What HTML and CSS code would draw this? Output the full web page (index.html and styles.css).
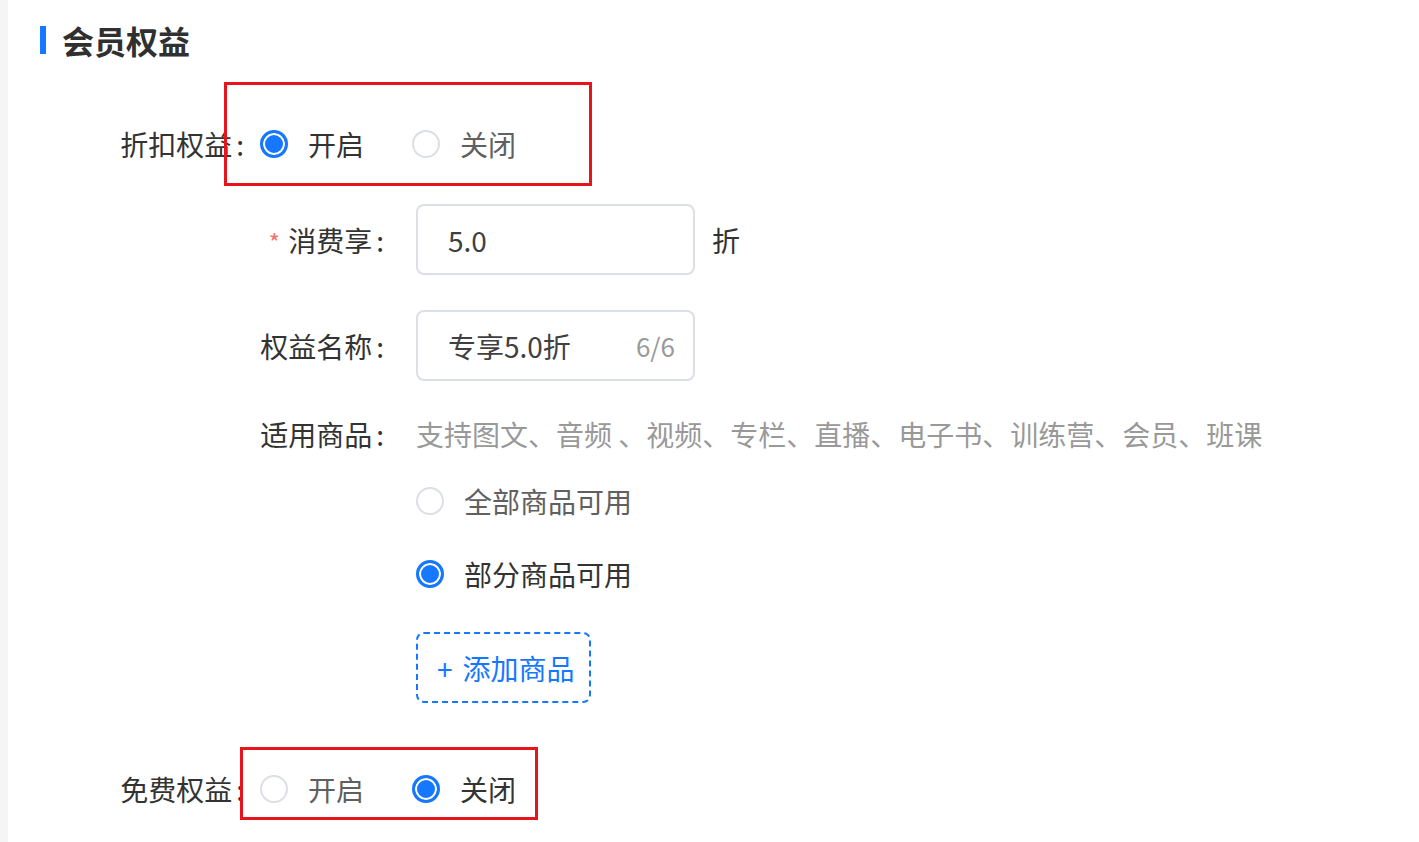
FILE: index.html
```html
<!DOCTYPE html>
<html>
  <head>
    <title>会员权益</title>
    <link rel="stylesheet" href="styles.css">
  </head>
  <body>
    <div class="page">
      <div class="side"></div>
      <div class="main">
        <h2 class="title"><span class="bar"></span>会员权益</h2>

        <div class="row row-discount">
          <div class="label">折扣权益</div>
          <div class="radios">
            <span class="opt"><i class="radio on"></i><span class="txt">开启</span></span>
            <span class="opt"><i class="radio"></i><span class="txt dim">关闭</span></span>
          </div>
          <div class="mark mark-one"></div>
        </div>

        <div class="sub">
          <div class="row row-rate">
            <div class="sublabel"><span class="req">*</span> 消费享</div>
            <div class="input"><span>5.0</span></div>
            <span class="unit">折</span>
          </div>

          <div class="row row-name">
            <div class="sublabel">权益名称</div>
            <div class="input"><span>专享5.0折</span><span class="count">6/6</span></div>
          </div>

          <div class="row row-goods">
            <div class="sublabel">适用商品</div>
            <div class="hint">支持图文、音频 、视频、专栏、直播、电子书、训练营、会员、班课</div>
          </div>

          <div class="goods">
            <span class="opt"><i class="radio"></i><span class="txt dim">全部商品可用</span></span>
            <span class="opt opt-part"><i class="radio on"></i><span class="txt">部分商品可用</span></span>
            <button class="add"><span class="plus">+</span>添加商品</button>
          </div>
        </div>

        <div class="row row-free">
          <div class="label">免费权益</div>
          <div class="radios">
            <span class="opt"><i class="radio"></i><span class="txt dim">开启</span></span>
            <span class="opt"><i class="radio on"></i><span class="txt">关闭</span></span>
          </div>
          <div class="mark mark-two"></div>
        </div>
      </div>
    </div>
  </body>
</html>
```

FILE: styles.css
```css
html, body {
  margin: 0;
  padding: 0;
  background: #ffffff;
}
body {
  font-family: "Noto Sans CJK SC", "Noto Sans", sans-serif;
  font-size: 28px;
  color: #333333;
}
.page {
  display: flex;
  min-height: 842px;
}
.side {
  width: 8px;
  background-color: #f5f5f5;
  flex-shrink: 0;
}
.main {
  flex: 1;
  padding: 20px 0 0 32px;
}
.title {
  display: flex;
  align-items: center;
  gap: 16px;
  margin: 0;
  height: 40px;
  font-size: 32px;
  font-weight: bold;
  color: #303030;
}
.bar {
  width: 6px;
  height: 28px;
  background-color: #1677ff;
}
.row {
  display: flex;
  align-items: center;
  position: relative;
}
.label {
  width: 220px;
  padding-right: 16px;
  box-sizing: border-box;
  text-align: right;
  line-height: 40px;
}
.label::after,
.sublabel::after {
  content: ":";
  margin-left: 4px;
}
.radios {
  display: flex;
  gap: 48px;
}
.opt {
  display: flex;
  align-items: center;
  gap: 20px;
  line-height: 40px;
}
.radio {
  display: block;
  width: 28px;
  height: 28px;
  box-sizing: border-box;
  border-radius: 50%;
  border: 2px solid #dcdfe6;
  background: #ffffff;
}
.radio.on {
  border: 3px solid #1677ff;
  background: #1677ff;
  box-shadow: inset 0 0 0 2px #ffffff;
}
.txt {
  color: #333333;
}
.txt.dim {
  color: #606060;
}
.row-discount {
  margin-top: 64px;
}
.mark {
  position: absolute;
  border: 3px solid #e8141c;
  box-sizing: border-box;
  pointer-events: none;
}
.mark-one {
  left: 184px;
  top: -42px;
  width: 368px;
  height: 104px;
}
.mark-two {
  left: 200px;
  top: -22px;
  width: 298px;
  height: 73px;
}
.sub {
  padding-left: 220px;
}
.sublabel {
  width: 156px;
  padding-right: 32px;
  box-sizing: border-box;
  text-align: right;
  white-space: nowrap;
}
.req {
  color: #f56c6c;
  font-size: 24px;
  margin-right: 2px;
}
.input {
  width: 279px;
  height: 71px;
  box-sizing: border-box;
  border: 2px solid #dcdfe6;
  border-radius: 8px;
  display: flex;
  align-items: center;
  justify-content: space-between;
  padding: 0 18px 0 30px;
  color: #404040;
}
.count {
  color: #999999;
  font-size: 26px;
}
.unit {
  margin-left: 17px;
}
.row-rate {
  margin-top: 40px;
}
.row-name {
  margin-top: 35px;
}
.row-goods {
  margin-top: 33px;
  line-height: 40px;
}
.hint {
  color: #999999;
}
.goods {
  padding-left: 156px;
  display: flex;
  flex-direction: column;
  align-items: flex-start;
}
.goods .opt {
  margin-top: 27px;
  gap: 20px;
}
.goods .opt-part {
  margin-top: 33px;
}
.add {
  margin-top: 38px;
  width: 175px;
  height: 71px;
  box-sizing: border-box;
  border: 2px dashed #1677ff;
  border-radius: 8px;
  background: #ffffff;
  color: #1677ff;
  font-family: "Noto Sans CJK SC", "Noto Sans", sans-serif;
  font-size: 28px;
  text-align: left;
  padding: 0 0 0 19px;
}
.plus {
  margin-right: 10px;
}
.row-free {
  margin-top: 66px;
}
```
